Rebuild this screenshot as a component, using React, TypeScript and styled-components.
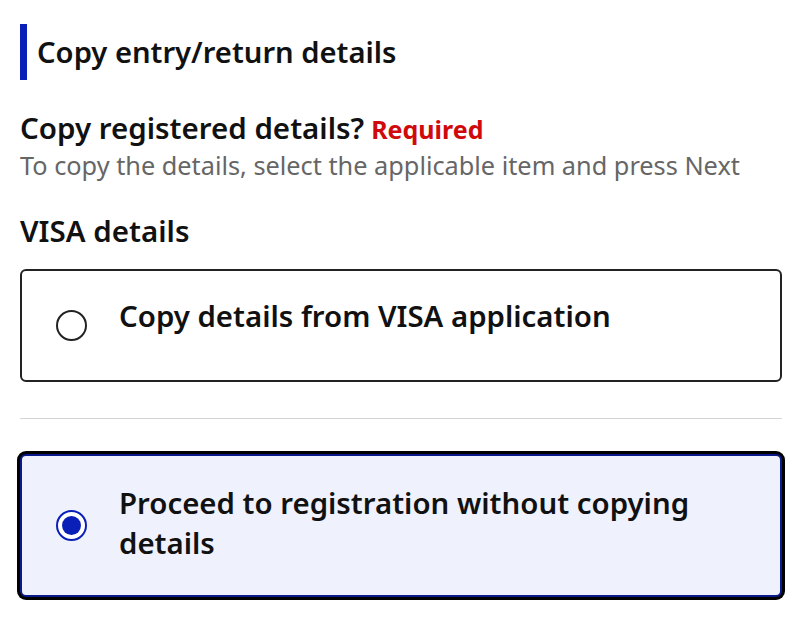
import React, { useState } from "react";
import styled, { createGlobalStyle } from "styled-components";

const GlobalStyle = createGlobalStyle`
  body {
    margin: 0;
    background: #fff;
    font-family: "Noto Sans", "Noto Sans CJK KR", sans-serif;
    color: #111;
  }
`;

const Page = styled.main`
  padding: 20px;
`;

const SectionTitle = styled.h2`
  margin: 4px 0 0;
  border-left: 7px solid #0a1fb8;
  padding-left: 10px;
  font-size: 29.2px;
  font-weight: 600;
  line-height: 56px;
`;

const Question = styled.div`
  margin-top: 30px;
  font-size: 29.5px;
  font-weight: 600;
  line-height: 36px;
`;

const Required = styled.span`
  color: #d00a0a;
  font-size: 25px;
  font-weight: 700;
  margin-left: 7px;
`;

const Hint = styled.p`
  margin: 0;
  color: #666;
  font-size: 25.3px;
  line-height: 36px;
`;

const GroupLabel = styled.div`
  margin-top: 30px;
  font-size: 29.5px;
  font-weight: 600;
  line-height: 36px;
`;

const Option = styled.label<{ $checked?: boolean }>`
  display: flex;
  align-items: center;
  gap: 32px;
  box-sizing: border-box;
  min-height: ${(p) => (p.$checked ? "143px" : "113px")};
  padding: 0 20px 0 34px;
  border: 2px solid ${(p) => (p.$checked ? "#0a1a8a" : "#222")};
  border-radius: 6px;
  background: ${(p) => (p.$checked ? "#eff2fc" : "#fff")};
  box-shadow: ${(p) => (p.$checked ? "0 0 0 3px #000" : "none")};
  cursor: pointer;
`;

const FirstOption = styled(Option)`
  margin-top: 20px;
`;

const Radio = styled.span<{ $checked?: boolean }>`
  flex: none;
  position: relative;
  width: 31px;
  height: 31px;
  box-sizing: border-box;
  border-radius: 50%;
  border: 2px solid ${(p) => (p.$checked ? "#0a1fb8" : "#222")};
  background: #fff;

  &::after {
    content: "";
    display: ${(p) => (p.$checked ? "block" : "none")};
    position: absolute;
    inset: 4px;
    border-radius: 50%;
    background: #0a1fb8;
  }
`;

const OptionText = styled.span<{ $lift?: number }>`
  font-size: 29.4px;
  font-weight: 600;
  line-height: 40px;
  padding-bottom: ${(p) => p.$lift ?? 6}px;
`;

const Divider = styled.hr`
  margin: 36px 0 35px;
  border: 0;
  border-top: 1px solid #d4d4d4;
`;

export default function App() {
  const [choice, setChoice] = useState("none");
  return (
    <Page>
      <GlobalStyle />
      <SectionTitle>Copy entry/return details</SectionTitle>
      <Question>
        Copy registered details?<Required>Required</Required>
      </Question>
      <Hint>To copy the details, select the applicable item and press Next</Hint>
      <GroupLabel>VISA details</GroupLabel>
      <FirstOption $checked={choice === "visa"} onClick={() => setChoice("visa")}>
        <Radio $checked={choice === "visa"} />
        <OptionText $lift={20}>Copy details from VISA application</OptionText>
      </FirstOption>
      <Divider />
      <Option $checked={choice === "none"} onClick={() => setChoice("none")}>
        <Radio $checked={choice === "none"} />
        <OptionText>Proceed to registration without copying details</OptionText>
      </Option>
    </Page>
  );
}
